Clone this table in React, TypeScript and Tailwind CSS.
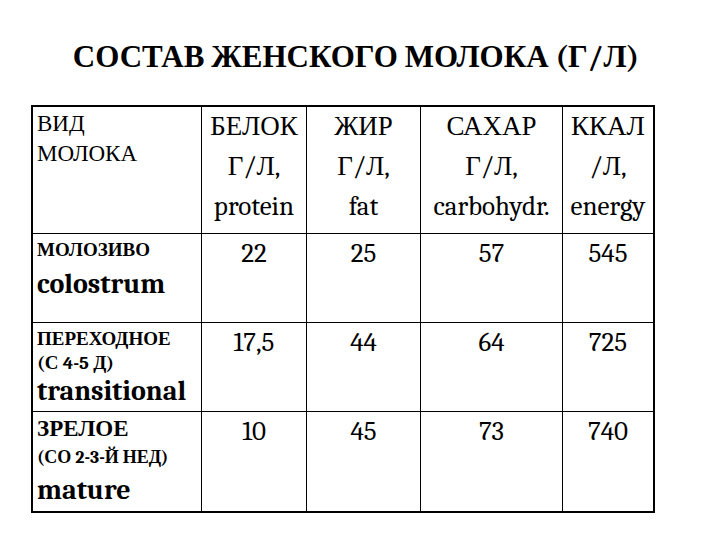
import { Fragment, type ReactNode } from 'react';

const headers = [
  ['БЕЛОК', 'Г/Л,', 'protein'],
  ['ЖИР', 'Г/Л,', 'fat'],
  ['САХАР', 'Г/Л,', 'carbohydr.'],
  ['ККАЛ', '/Л,', 'energy'],
];

const rows = [
  { values: ['22', '25', '57', '545'] },
  { values: ['17,5', '44', '64', '725'] },
  { values: ['10', '45', '73', '740'] },
];

function Cell({ last, lastRow, className = '', children }: { last?: boolean; lastRow?: boolean; className?: string; children: ReactNode }) {
  const border = last
    ? lastRow
      ? ''
      : 'border-b border-black'
    : lastRow
      ? 'border-r border-black'
      : 'border-r border-b border-black';
  return <div className={`${border} ${className}`}>{children}</div>;
}

function RowLabel({ index }: { index: number }) {
  if (index === 0) {
    return (
      <div className="pl-[4px] font-bold">
        <div className="text-[19px] leading-[24px] pt-[4px]">МОЛОЗИВО</div>
        <div className="text-[28px] leading-[36px] mt-[4px]">colostrum</div>
      </div>
    );
  }
  if (index === 1) {
    return (
      <div className="pl-[4px] font-bold">
        <div className="text-[19px] leading-[24px] pt-[4px]">ПЕРЕХОДНОЕ</div>
        <div className="text-[19px] leading-[25px]">(С 4-5 Д)</div>
        <div className="text-[28px] leading-[30px]">transitional</div>
      </div>
    );
  }
  return (
    <div className="pl-[4px] font-bold">
      <div className="text-[23px] leading-[28px] pt-[3px]">ЗРЕЛОЕ</div>
      <div className="text-[18px] leading-[29px]">(СО 2-3-Й НЕД)</div>
      <div className="text-[28px] leading-[36px]">mature</div>
    </div>
  );
}

export default function App() {
  return (
    <div className="w-[720px] h-[540px] bg-white text-black font-serif [font-family:'Liberation_Serif',serif]">
      {/* заголовок */}
      <h1 className="pt-[42px] pr-2 text-center text-[31px] font-bold leading-none">
        СОСТАВ ЖЕНСКОГО МОЛОКА (Г/Л)
      </h1>

      {/* таблица */}
      <div className="ml-[31px] mt-[32px] w-[624px] h-[408px] border-2 border-black grid grid-cols-[169px_105px_114px_142px_90px] grid-rows-[127px_89px_89px_99px]">
        <Cell className="pl-[4px] pt-[2px] text-[23px] leading-[30px]">
          <div>ВИД</div>
          <div>МОЛОКА</div>
        </Cell>
        {headers.map((h, i) => (
          <Cell key={i} last={i === headers.length - 1} className="text-center text-[27px] leading-[40px] whitespace-nowrap">
            {h.map((line, j) => (
              <div key={j}>{line}</div>
            ))}
          </Cell>
        ))}

        {rows.map((row, r) => (
          <Fragment key={r}>
            <Cell lastRow={r === rows.length - 1}>
              <RowLabel index={r} />
            </Cell>
            {row.values.map((v, c) => (
              <Cell
                key={c}
                last={c === row.values.length - 1}
                lastRow={r === rows.length - 1}
                className="text-center text-[27px] leading-[40px]"
              >
                {v}
              </Cell>
            ))}
          </Fragment>
        ))}
      </div>
    </div>
  );
}
